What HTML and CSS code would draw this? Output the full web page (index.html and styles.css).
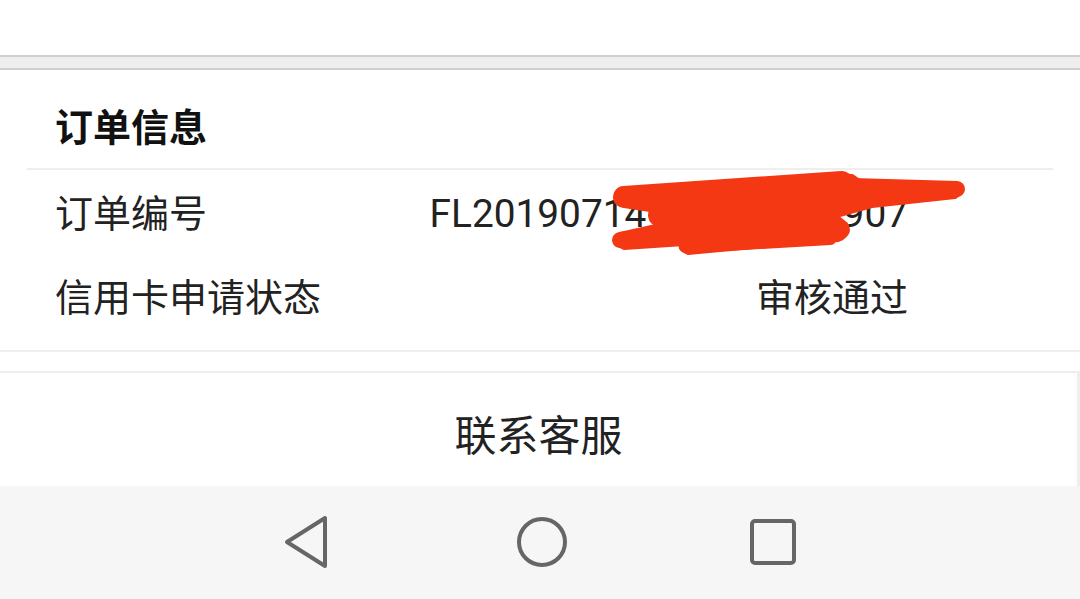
FILE: index.html
```html
<!DOCTYPE html>
<html lang="zh-CN">
<head>
<meta charset="utf-8">
<title>订单信息</title>
<link rel="stylesheet" href="styles.css">
</head>
<body>
<div class="screen">
  <div class="top"></div>
  <div class="band"></div>
  <section class="card">
    <h2 class="card-title">订单信息</h2>
    <div class="divider"></div>
    <div class="rows">
      <div class="row"><span class="label">订单编号</span><span class="value num">FL20190714153022837907</span></div>
      <div class="row"><span class="label">信用卡申请状态</span><span class="value">审核通过</span></div>
    </div>
  </section>
  <div class="gap"></div>
  <div class="service"><span>联系客服</span></div>
  <nav class="navbar">
    <svg class="nav-icon" width="50" height="54" viewBox="0 0 50 54"><path d="M43 3 L43 51 L5 27 Z" fill="none" stroke="#666" stroke-width="4" stroke-linejoin="round"/></svg>
    <svg class="nav-icon" width="54" height="54" viewBox="0 0 54 54"><circle cx="27" cy="27" r="23" fill="none" stroke="#666" stroke-width="4"/></svg>
    <svg class="nav-icon" width="50" height="50" viewBox="0 0 50 50"><rect x="4" y="4" width="42" height="42" rx="3" fill="none" stroke="#666" stroke-width="4"/></svg>
  </nav>
  <svg class="redact" width="1080" height="599" viewBox="0 0 1080 599">
    <g fill="#f33813" stroke="#f33813" stroke-linecap="round" stroke-linejoin="round">
      <path d="M620 190 C700 186 780 182 835 175 L852 176 L862 183 L955 185 Q966 190 955 197 L872 206 L836 216 L846 224 Q850 236 838 240 L720 250 L688 253 Q676 248 684 244 L624 248 Q610 242 620 234 L656 226 L650 210 L624 206 Q612 198 620 190 Z" stroke-width="4"/>
      <path d="M624 197 L842 182" stroke-width="22" fill="none"/>
      <path d="M852 186 L957 189" stroke-width="16" fill="none"/>
      <path d="M620 240 L700 232 L842 230" stroke-width="16" fill="none"/>
      <path d="M690 246 L830 238" stroke-width="14" fill="none"/>
      <path d="M660 215 L860 198" stroke-width="24" fill="none"/>
    </g>
  </svg>
</div>
</body>
</html>
```

FILE: styles.css
```css
html, body {
  margin: 0;
  padding: 0;
  background: #ffffff;
}

.screen {
  position: relative;
  width: 1080px;
  height: 599px;
  overflow: hidden;
  display: flex;
  flex-direction: column;
  font-family: Roboto, "Noto Sans CJK SC", sans-serif;
  color: #222;
}

.top {
  height: 55px;
  background: #fff;
  flex: none;
}

.band {
  flex: none;
  height: 11px;
  background: #eeeeee;
  border-top: 2px solid #cfcfcf;
  border-bottom: 2px solid #cfcfcf;
}

.card {
  flex: none;
  background: #fff;
  height: 280px;
  display: flex;
  flex-direction: column;
}

.card-title {
  margin: 0;
  height: 98px;
  box-sizing: border-box;
  padding: 36px 55px 0;
  font-size: 38px;
  line-height: 44px;
  font-weight: bold;
  color: #111;
}

.divider {
  height: 2px;
  margin: 0 27px;
  background: #eeeeee;
}

.rows {
  padding-top: 2px;
}

.row {
  height: 84px;
  display: flex;
  align-items: center;
  justify-content: space-between;
  padding: 0 172px 0 55px;
  font-size: 38px;
  line-height: 44px;
}

.label {
  color: #222;
}

.value {
  color: #222;
  text-align: right;
}

.num {
  font-size: 38.8px;
}

.gap {
  flex: none;
  height: 19px;
  border-top: 2px solid #eeeeee;
  border-bottom: 2px solid #eeeeee;
}

.service {
  flex: none;
  height: 113px;
  box-sizing: border-box;
  padding-top: 5px;
  border-right: 3px solid #eeeeee;
  display: flex;
  align-items: center;
  justify-content: center;
  font-size: 42px;
  color: #222;
}

.navbar {
  flex: 1;
  background: #f6f6f6;
  display: flex;
  align-items: center;
  justify-content: center;
  padding-bottom: 2px;
}

.nav-icon:nth-child(1) {
  margin-right: 183px;
}

.nav-icon:nth-child(3) {
  margin-left: 179px;
}

.redact {
  position: absolute;
  left: 0;
  top: 0;
  pointer-events: none;
}
```
